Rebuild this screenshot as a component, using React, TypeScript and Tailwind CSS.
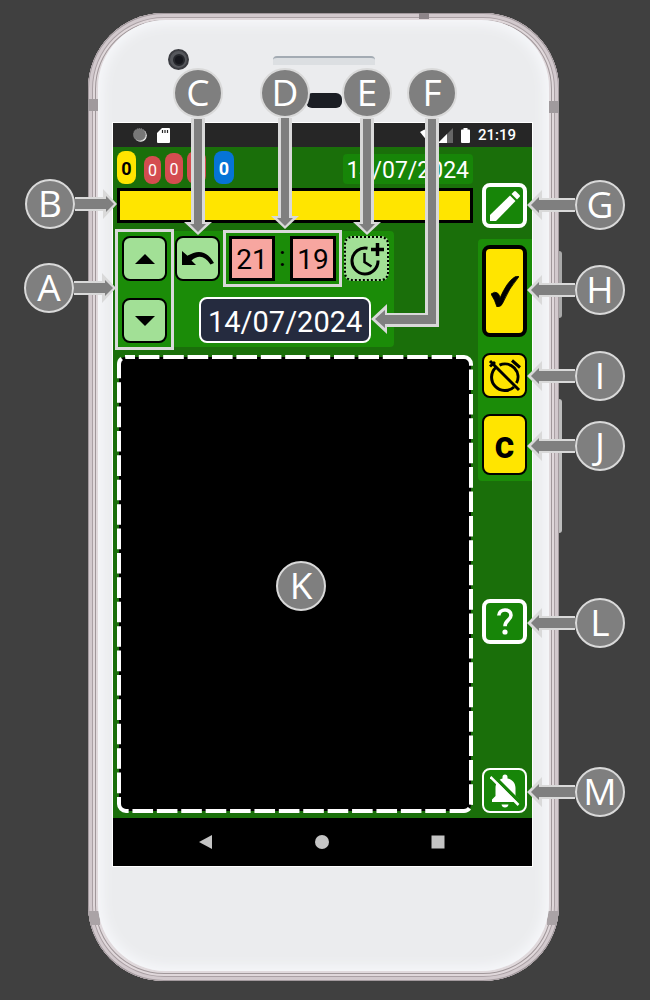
import type { ReactNode } from "react";

type Direction = "left" | "right" | "down";

const arrowShapes: Record<Direction, { box: string; size: string; outer: string; inner: string }> = {
  left: {
    box: "0 0 48 30",
    size: "h-[30px] w-12",
    outer: "0,15 15,0 15,8 48,8 48,22 15,22 15,30",
    inner: "4,15 12,7 12,10 48,10 48,20 12,20 12,23",
  },
  right: {
    box: "0 0 42 30",
    size: "h-[30px] w-[42px]",
    outer: "42,15 28,0 28,8 0,8 0,22 28,22 28,30",
    inner: "39,15 31,7 31,10 0,10 0,20 31,20 31,23",
  },
  down: {
    box: "0 0 28 117",
    size: "h-[117px] w-7",
    outer: "14,117 0,104 7,104 7,0 21,0 21,104 28,104",
    inner: "14,114 6,106 10,106 10,1 18,1 18,106 22,106",
  },
};

function Arrow({ direction, size }: { direction: Direction; size?: string }) {
  const shape = arrowShapes[direction];
  return (
    <svg
      viewBox={shape.box}
      preserveAspectRatio="xMidYMax slice"
      className={`shrink-0 ${size ?? shape.size}`}
      aria-hidden="true"
    >
      <polygon points={shape.outer} fill="#d9d9d9" />
      <polygon points={shape.inner} fill="#7f7f7f" />
    </svg>
  );
}

function Disc({ children }: { children: ReactNode }) {
  return (
    <span className="flex size-[50px] shrink-0 items-center justify-center rounded-full border-2 border-[#d9d9d9] bg-[#7f7f7f] pb-[3px] font-['Open_Sans',sans-serif] text-[37px] leading-none text-white">
      {children}
    </span>
  );
}

function Callout({
  label,
  direction,
  place,
  arrowSize,
}: {
  label: string;
  direction?: Direction;
  place: string;
  arrowSize?: string;
}) {
  const flow =
    direction === "left" ? "flex-row-reverse" : direction === "down" ? "flex-col" : "flex-row";
  return (
    <div className={`pointer-events-none absolute flex items-center ${flow} ${place}`}>
      <Disc>{label}</Disc>
      {direction && <Arrow direction={direction} size={arrowSize} />}
    </div>
  );
}

function KeyButton({ label, className, children }: { label: string; className: string; children: ReactNode }) {
  return (
    <button
      type="button"
      aria-label={label}
      className={`flex w-[45px] shrink-0 items-center justify-center rounded-lg ${className}`}
    >
      {children}
    </button>
  );
}

function StatusBar() {
  return (
    <div className="flex h-6 items-center bg-[#262626] pr-4 pl-5 text-white">
      <svg viewBox="0 0 14 14" className="size-3.5" aria-hidden="true">
        <circle cx="7.6" cy="7.6" r="6.2" fill="#f2f2f2" />
        <circle cx="6.6" cy="6.6" r="6.2" fill="#777" stroke="#999" strokeDasharray="1 1" strokeWidth="0.8" />
      </svg>
      <svg viewBox="0 0 13 15" className="ml-2.5 h-[15px] w-[13px]" aria-hidden="true">
        <path d="M5 0h7q1 0 1 1v13q0 1-1 1H1q-1 0-1-1V5z" fill="#fff" />
        <path d="M5.5 2v3M8 2v3M10.5 2v3" stroke="#262626" strokeWidth="1.2" />
      </svg>
      <div className="ml-auto flex items-center">
        <svg viewBox="0 0 18 15" className="h-[15px] w-[18px]" aria-hidden="true">
          <path d="M0 4Q8-2 16 4L8 14z" fill="#fff" />
        </svg>
        <svg viewBox="0 0 15 15" className="h-[15px] w-[15px]" aria-hidden="true">
          <path d="M0 15L15 0v15z" fill="#666" />
          <path d="M0 15L9 6v9z" fill="#fff" />
        </svg>
        <svg viewBox="0 0 9 15" className="ml-2 h-[15px] w-[9px]" aria-hidden="true">
          <path d="M2.5 0h4v1.5H8q1 0 1 1V14q0 1-1 1H1q-1 0-1-1V2.5q0-1 1-1h1.5z" fill="#fff" />
        </svg>
        <time className="ml-2 text-[15px] leading-none font-medium">21:19</time>
      </div>
    </div>
  );
}

function Counters() {
  const badge = "flex items-center justify-center rounded-lg leading-none";
  return (
    <div className="flex h-[37px] items-end gap-1">
      <span className={`${badge} h-[33px] w-[19px] bg-[#ffe500] pt-0.5 text-lg font-bold text-black`}>0</span>
      <span className={`${badge} ml-1 h-7 w-[17px] bg-[#d44d50] pt-0.5 text-base text-white`}>0</span>
      <span className={`${badge} h-[31px] w-[18px] bg-[#d44d50] pt-0.5 text-base text-white`}>0</span>
      <span className={`${badge} h-[33px] w-[19px] bg-[#d44d50] pt-0.5 text-base text-white`}>0</span>
      <span className={`${badge} ml-1 h-[33px] w-5 bg-[#0674d6] pt-0.5 text-lg font-bold text-white`}>0</span>
      <time className="ml-auto flex h-[30px] items-center rounded bg-[#178508] px-1 pt-0.5 text-[23px] leading-none text-white">
        14/07/2024
      </time>
    </div>
  );
}

function TimePanel() {
  const green = "h-[45px] border-2 border-black bg-[#a2e096]";
  const digit =
    "h-[45px] w-[46px] border-[3px] border-black bg-[#f7a6a0] pt-0.5 text-center text-[28px] text-black";
  return (
    <section className="mt-2 flex gap-2 self-start rounded bg-[#1b8c08] px-[5px] pt-[5px] pb-1">
      <div className="flex flex-col justify-between outline-[3px] outline-offset-4 outline-[#d9d9d9]">
        <KeyButton label="Up" className={green}>
          <svg viewBox="0 0 20 10" className="h-2.5 w-5"><path d="M0 10L10 0l10 10z" /></svg>
        </KeyButton>
        <KeyButton label="Down" className={green}>
          <svg viewBox="0 0 20 10" className="h-2.5 w-5"><path d="M0 0h20L10 10z" /></svg>
        </KeyButton>
      </div>
      <div className="flex flex-col items-start gap-4">
        <div className="flex">
          <KeyButton label="Undo" className={green}>
            <svg viewBox="0 0 32 16" className="h-4 w-8">
              <path d="M0 0v14h14L9.5 9.5Q20 .5 28.5 13.5l3.5-1.5Q22-5.5 5.5 4.8z" />
            </svg>
          </KeyButton>
          <div className="mr-2 ml-[9px] flex items-center outline-[3px] outline-offset-[3px] outline-[#d9d9d9]">
            <input aria-label="Hours" defaultValue="21" className={digit} />
            <span className="w-[15px] pb-1 text-center text-[28px] leading-none text-black">:</span>
            <input aria-label="Minutes" defaultValue="19" className={digit} />
          </div>
          <KeyButton label="Add time" className="h-[45px] border-2 border-dotted border-black bg-[#a2e096]">
            <svg viewBox="0 0 36 34" className="h-[34px] w-9" fill="none" stroke="#000" strokeWidth="3">
              <path d="M18.5 6.2A13 13 0 1 0 29 18.5" />
              <path d="M15.5 11v9l7 4.5" strokeWidth="2.5" />
              <path d="M28.5 1v13M22 7.5h13" strokeWidth="3.5" />
            </svg>
          </KeyButton>
        </div>
        <button
          type="button"
          className="ml-6 h-[46px] rounded-lg border-2 border-white bg-[#252b3f] px-[7px] pt-1 text-[29px] leading-none text-white"
        >
          14/07/2024
        </button>
      </div>
    </section>
  );
}

function Canvas() {
  return (
    <section aria-label="Alarm list" className="relative mt-2 min-h-[458px] flex-1">
      <div className="absolute inset-0.5 rounded-md bg-black" />
      <svg className="absolute inset-0 size-full" fill="none" aria-hidden="true">
        <rect
          x="2"
          y="2"
          rx="7"
          className="h-[calc(100%-4px)] w-[calc(100%-4px)]"
          stroke="#fff"
          strokeWidth="4"
          strokeDasharray="20.6 3.8"
          strokeDashoffset="11.6"
        />
      </svg>
    </section>
  );
}

function Sidebar() {
  return (
    <aside className="flex w-[54px] shrink-0 flex-col pt-9">
      <KeyButton label="Edit" className="ml-1 h-[45px] border-4 border-white bg-[#178508]">
        <svg viewBox="0 0 30 30" className="size-[30px]" fill="#fff">
          <path d="M0 24L20 4.5 25.5 10 6 30H0z" />
          <path d="M21.5 3L24 .5q1-1 2 0L29.5 4q1 1 0 2L27 8.5z" />
        </svg>
      </KeyButton>
      <div className="mt-[11px] flex flex-col gap-4 rounded-l bg-[#1b8c08] py-1.5 pl-1">
        <KeyButton label="Confirm" className="h-[92px] border-4 border-black bg-[#ffe500]">
          <svg viewBox="0 0 28 31" className="h-[31px] w-7">
            <path
              d="M0 18q4-3 6.5-1 2 1.500 2.500 5Q16 6 23 1.500q2.500-2 5-1Q18 12 11.500 27.500q-1 3-5.500 3.500Q4 24 0 18z"
              stroke="#000"
              strokeWidth="0.8"
            />
          </svg>
        </KeyButton>
        <KeyButton label="Alarm off" className="h-[45px] border-2 border-black bg-[#ffe500]">
          <svg viewBox="0 0 34 34" className="size-[34px]" fill="none" stroke="#000" strokeWidth="3">
            <path d="M7.8 8.5A13 13 0 0 0 26 28M11.5 6.2A13 13 0 0 1 28.5 24" />
            <path d="M2 2l29 29M2 7.5l5-4.5M24 1.5l8 7" />
          </svg>
        </KeyButton>
        <KeyButton
          label="Clear"
          className="h-[61px] border-2 border-black bg-[#ffe500] text-[38px] leading-none font-bold text-black"
        >
          c
        </KeyButton>
      </div>
      <KeyButton label="Help" className="mt-[118px] ml-1 h-[45px] border-4 border-white bg-[#178508]">
        <svg viewBox="0 0 16 27" className="h-[27px] w-4" fill="none" stroke="#fff" strokeWidth="3.6">
          <path d="M1.8 7.5C2 .2 14 .2 14 7.2c0 5-6 5-6 11" />
          <circle cx="8" cy="24" r="2.6" fill="#fff" stroke="none" />
        </svg>
      </KeyButton>
      <KeyButton label="Mute" className="mt-auto mb-[5px] ml-1 h-[45px] border-2 border-white bg-[#178508]">
        <svg viewBox="0 0 30 34" className="h-[34px] w-[30px]">
          <path
            d="M2 28v-2.500l3.500-3.500V14C5.500 9 8.500 5.500 12.500 4.500V3q0-2.500 2.500-2.500T17.500 3v1.500C22 5.500 25.500 9 25.500 14v8l3.500 3.500V28zM11.500 30.500h7q-.5 3-3.500 3t-3.500-3z"
            fill="#fff"
          />
          <path d="M2 .5l29 29" stroke="#178508" strokeWidth="3.5" />
          <path d="M.5 3l28 28" stroke="#fff" strokeWidth="2.5" />
        </svg>
      </KeyButton>
    </aside>
  );
}

function NavBar() {
  return (
    <nav aria-label="System" className="flex h-12 items-center justify-center gap-[102px] bg-black pr-0.5">
      <button type="button" aria-label="Back">
        <svg viewBox="0 0 14 14" className="size-3.5"><path d="M0 7L13 0v14z" fill="#c4c4c4" /></svg>
      </button>
      <button type="button" aria-label="Home">
        <svg viewBox="0 0 14 14" className="size-3.5"><circle cx="7" cy="7" r="7" fill="#c4c4c4" /></svg>
      </button>
      <button type="button" aria-label="Recent">
        <svg viewBox="0 0 14 14" className="size-3.5"><path d="M.5.5h13v13H.5z" fill="#c4c4c4" /></svg>
      </button>
    </nav>
  );
}

function Phone() {
  return (
    <div className="relative rounded-[76px] bg-[#e0d9dc] px-2.5 pt-[7px] pb-2.5 shadow-[inset_0_0_0_1px_#a39a9e,inset_0_0_0_4px_#d2c9cd,inset_0_0_0_5px_#aaa0a4,inset_0_0_0_7px_#e0d8db,inset_0_0_0_8px_#a0979a]">
      <div className="absolute inset-0 overflow-hidden rounded-[76px]">
        <span className="absolute top-[86px] left-0 h-3 w-2.5 bg-[#a09a9d]" />
        <span className="absolute top-[88px] right-0 h-3 w-2.5 bg-[#a09a9d]" />
        <span className="absolute top-0 left-[331px] h-1.5 w-2.5 bg-[#8d8589]" />
        <span className="absolute bottom-14 left-0 h-3.5 w-3 bg-[#aaa3a6]" />
        <span className="absolute right-0 bottom-14 h-3.5 w-3 bg-[#aaa3a6]" />
      </div>
      <span className="absolute top-[238px] -right-[3px] h-[67px] w-[3px] rounded-r bg-[#a9a9a9]" />
      <span className="absolute top-[386px] -right-[3px] h-[134px] w-[3px] rounded-r bg-[#bdbdbd]" />
      <div className="relative rounded-[68px] bg-[#ebecee] pr-[17px] pb-[105px] pl-[15px] shadow-[inset_0_0_12px_5px_#f6f7fa]">
        <div className="h-[103px]">
          <span className="absolute top-[29px] left-[70px] flex size-[21px] items-center justify-center rounded-full border-2 border-[#3c3d42] bg-[#55575c]">
            <span className="size-3 rounded-full border-2 border-[#25272c] bg-[#15161c]" />
          </span>
          <span className="absolute top-9 left-1/2 h-[9px] w-[102px] -translate-x-1/2 rounded-t border-t-2 border-[#a3abb3] bg-[#dcdfe2]" />
          <span className="absolute top-[73px] left-1/2 h-[15px] w-9 -translate-x-1/2 rounded-md bg-[#1b1e24]" />
        </div>
        <main className="bg-[#1a6f0a] font-['Roboto',sans-serif] ring-1 ring-white">
          <StatusBar />
          <div className="flex gap-[5px] pl-1">
            <div className="flex min-w-0 flex-1 flex-col pb-[5px]">
              <Counters />
              <div className="mt-1 h-[35px] border-[3px] border-black bg-[#ffe500]" />
              <TimePanel />
              <Canvas />
            </div>
            <Sidebar />
          </div>
          <NavBar />
        </main>
      </div>
    </div>
  );
}

export default function App() {
  return (
    <div className="min-h-screen bg-[#404040]">
      <figure className="relative mx-auto max-w-[650px] pt-[13px] pr-[91px] pb-[19px] pl-[88px]">
        <Phone />
        <Callout label="A" direction="right" place="top-[263px] left-6" />
        <Callout label="B" direction="right" place="top-[179px] left-[25px]" />
        <Callout label="C" direction="down" place="top-[68px] left-[173px]" />
        <Callout label="D" direction="down" place="top-[68px] left-[260px]" arrowSize="h-[111px] w-7" />
        <Callout label="E" direction="down" place="top-[68px] left-[342px]" />
        <div className="pointer-events-none absolute top-[68px] left-[371px] flex flex-col items-end">
          <Disc>F</Disc>
          <svg viewBox="0 0 86 217" className="h-[217px] w-[86px]" aria-hidden="true">
            <polygon points="54,0 68,0 68,209 16,209 16,216 0,201 16,186 16,195 54,195" fill="#d9d9d9" />
            <polygon points="57,1 65,1 65,206 14,206 14,210 4,201 14,192 14,197 57,197" fill="#7f7f7f" />
          </svg>
        </div>
        <Callout label="G" direction="left" place="top-[180px] right-[25px]" />
        <Callout label="H" direction="left" place="top-[265px] right-[25px]" />
        <Callout label="I" direction="left" place="top-[351px] right-[25px]" />
        <Callout label="J" direction="left" place="top-[421px] right-[25px]" />
        <Callout label="K" place="top-[561px] left-[276px]" />
        <Callout label="L" direction="left" place="top-[598px] right-[25px]" />
        <Callout label="M" direction="left" place="top-[767px] right-[25px]" />
      </figure>
    </div>
  );
}
